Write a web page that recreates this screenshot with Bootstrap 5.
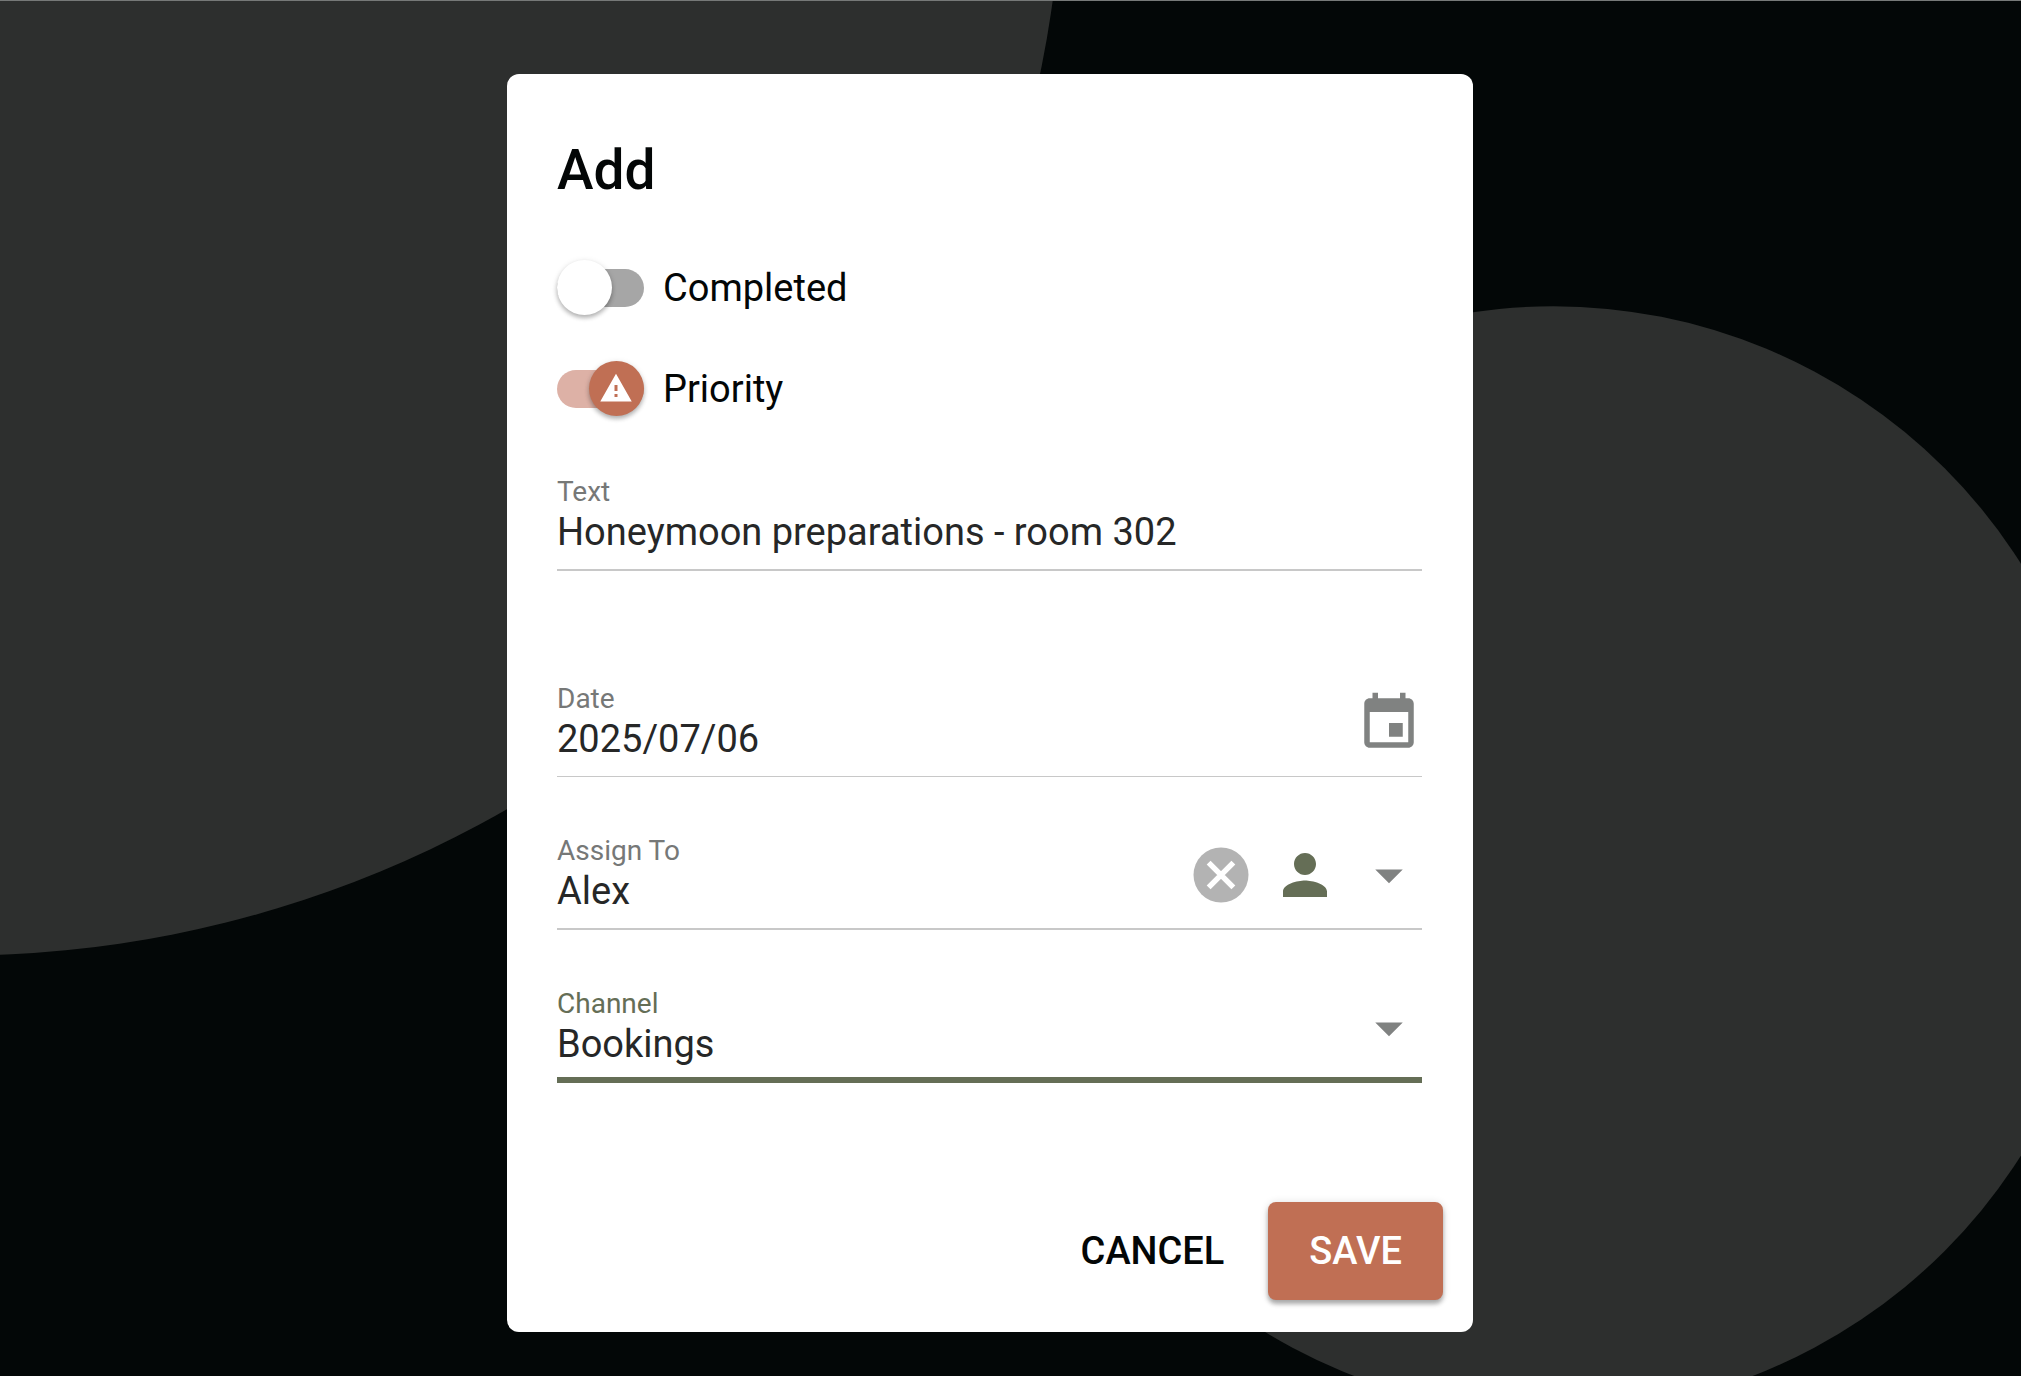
<!DOCTYPE html>
<html lang="en">
<head>
<meta charset="utf-8">
<meta name="viewport" content="width=device-width, initial-scale=1">
<title>Add</title>
<link rel="stylesheet" href="https://cdn.jsdelivr.net/npm/bootstrap@5.3.0/dist/css/bootstrap.min.css">
<style>
  body { font-family: Roboto, "Noto Sans", sans-serif; font-size: 38px; line-height: 48px; color: #030606; background: #030707; }
  .backdrop-art { position: absolute; inset: 0; width: 100%; height: 100%; z-index: 0; }
  .stage { position: relative; min-height: 100vh; overflow: hidden; border-top: 1px solid #767978; padding: 73px 41px 45px 0; }
  .dialog-card { position: relative; z-index: 1; width: 100%; max-width: 966px; background: #fff; border-radius: 12px; padding: 64px 30px 32px 50px; }
  .dialog-main { padding-right: 21px; }
  .dialog-title { font-size: 55px; line-height: 64px; font-weight: 500; margin: 0 0 58px; }
  .toggle-row { gap: 19px; height: 55px; }
  .toggle-box { position: relative; display: flex; }
  .toggle-input { appearance: none; position: relative; width: 87px; height: 38px; margin: 0; border-radius: 19px; background: #a6a6a6; }
  .toggle-input::before { content: ""; position: absolute; left: 0; top: -9px; width: 55px; height: 55px; border-radius: 50%; background: #fff; box-shadow: 0 3px 4px rgba(0,0,0,.25), 0 1px 6px rgba(0,0,0,.1); }
  .toggle-input:checked { background: #ddb1a6; }
  .toggle-input:checked::before { left: auto; right: 0; background: #c06f54; }
  .toggle-icon { position: absolute; right: 10px; top: 0; width: 36px; height: 36px; fill: #fff; pointer-events: none; }
  .toggles { gap: 46px; margin-bottom: 60px; }
  .line-field { padding-bottom: 13px; border-bottom: 2px solid #c8c8c8; }
  .line-field.thin { border-bottom-width: 1px; }
  .line-field.active { padding-bottom: 9px; border-bottom: 6px solid #656e56; }
  .line-field label { display: block; font-size: 28px; line-height: 32px; color: #767877; }
  .line-field.active label { color: #656e56; }
  .line-input { appearance: none; display: block; width: 100%; height: 48px; padding: 0; border: 0; outline: 0; background: none; color: #262727; }
  .field-icons { gap: 18px; }
  .icon { display: block; width: 66px; height: 66px; fill: #808281; }
  .icon.person { fill: #656e56; }
  .icon-btn { border: 0; padding: 0; background: none; }
  .fields { gap: 58px; margin-top: 112px; }
  .actions { gap: 12px; margin-top: 119px; }
  .action-btn { height: 98px; border: 0; border-radius: 8px; font-size: 38px; line-height: 48px; font-weight: 500; padding: 0 32px; color: #030606; }
  .action-btn.save { padding: 0 41px; background: #c06f54; color: #fff; box-shadow: 0 4px 4px rgba(0,0,0,.28), 0 1px 8px rgba(0,0,0,.14); }
</style>
</head>
<body>
<main class="stage d-flex justify-content-center align-items-start">
  <svg class="backdrop-art" viewBox="0 0 2021 1375" preserveAspectRatio="xMidYMid slice" aria-hidden="true">
    <circle cx="-42" cy="-151" r="1105" fill="#2d2f2e"/>
    <circle cx="1553" cy="858" r="553" fill="#2d2f2e"/>
  </svg>
  <form class="dialog-card">
    <div class="dialog-main">
      <h1 class="dialog-title">Add</h1>
      <div class="toggles d-flex flex-column">
        <div class="toggle-row d-flex align-items-center">
          <span class="toggle-box"><input class="toggle-input" type="checkbox" role="switch" id="completed"></span>
          <label for="completed">Completed</label>
        </div>
        <div class="toggle-row d-flex align-items-center">
          <span class="toggle-box"><input class="toggle-input" type="checkbox" role="switch" id="priority" checked>
            <svg class="toggle-icon" viewBox="0 0 24 24"><path d="M1.500 21h21L12 2.500zM13 18h-2v-2h2zm0-4h-2v-4h2z"/></svg></span>
          <label for="priority">Priority</label>
        </div>
      </div>
      <div class="line-field">
        <label for="text">Text</label>
        <input class="line-input" type="text" id="text" value="Honeymoon preparations - room 302">
      </div>
      <div class="fields d-flex flex-column">
        <div class="line-field thin d-flex align-items-center">
          <div class="flex-grow-1">
            <label for="date">Date</label>
            <input class="line-input" type="text" id="date" value="2025/07/06">
          </div>
          <button class="icon-btn" type="button" aria-label="Open calendar"><svg class="icon" viewBox="0 0 24 24"><path d="M17 12h-5v5h5v-5zM16 1v2H8V1H6v2H5c-1.110 0-1.990.9-1.990 2L3 19c0 1.100.89 2 2 2h14c1.100 0 2-.9 2-2V5c0-1.100-.9-2-2-2h-1V1h-2zm3 18H5V8h14v11z"/></svg></button>
        </div>
        <div class="line-field d-flex align-items-center">
          <div class="flex-grow-1">
            <label for="assign">Assign To</label>
            <select class="line-input" id="assign"><option>Alex</option></select>
          </div>
          <div class="field-icons d-flex">
            <button class="icon-btn" type="button" aria-label="Clear"><svg class="icon" viewBox="0 0 24 24"><circle cx="12" cy="12" r="10" fill="#b3b3b3"/><path d="M7.500 7.500l9 9M16.500 7.500l-9 9" stroke="#fff" stroke-width="2"/></svg></button>
            <svg class="icon person" viewBox="0 0 24 24"><path d="M12 12c2.210 0 4-1.790 4-4s-1.790-4-4-4-4 1.790-4 4 1.790 4 4 4zm0 2c-2.670 0-8 1.340-8 4v2h16v-2c0-2.660-5.330-4-8-4z"/></svg>
            <svg class="icon" viewBox="0 0 24 24"><path d="M7 10l5 5 5-5z"/></svg>
          </div>
        </div>
        <div class="line-field active d-flex align-items-center">
          <div class="flex-grow-1">
            <label for="channel">Channel</label>
            <select class="line-input" id="channel"><option>Bookings</option></select>
          </div>
          <svg class="icon" viewBox="0 0 24 24"><path d="M7 10l5 5 5-5z"/></svg>
        </div>
      </div>
    </div>
    <div class="actions d-flex justify-content-end">
      <button class="action-btn bg-transparent" type="button">CANCEL</button>
      <button class="action-btn save" type="submit">SAVE</button>
    </div>
  </form>
</main>
<script src="https://cdn.jsdelivr.net/npm/bootstrap@5.3.0/dist/js/bootstrap.bundle.min.js"></script>
</body>
</html>
